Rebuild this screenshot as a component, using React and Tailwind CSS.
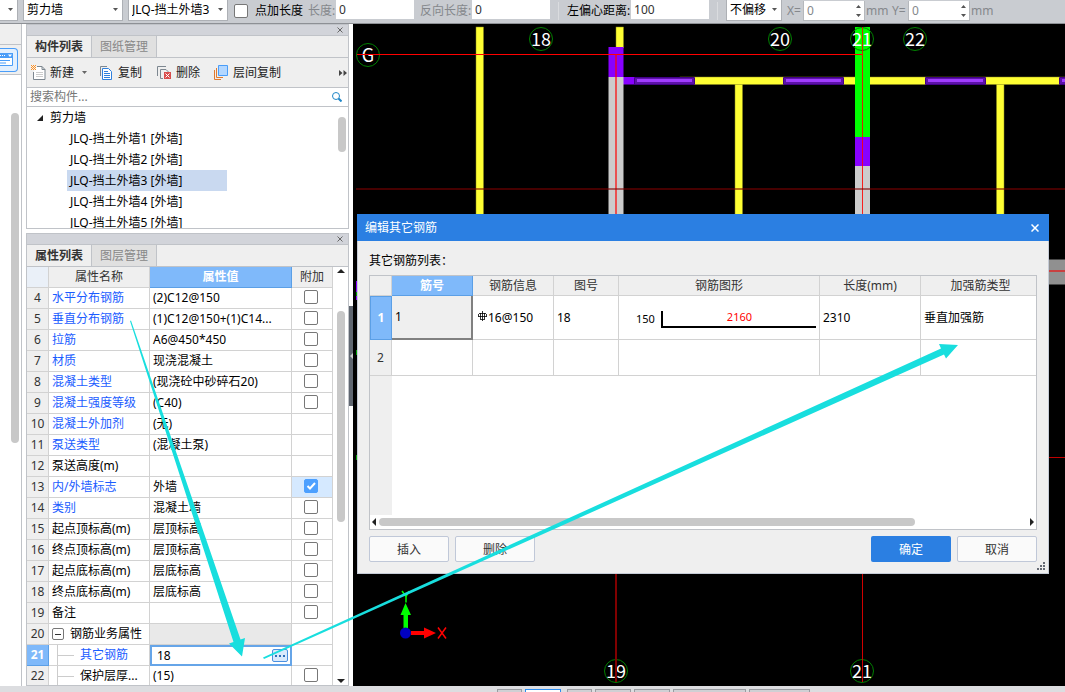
import { clsx } from 'clsx'

const components = [1, 2, 3, 4, 5]

const properties = [
  { id: 4, name: '水平分布钢筋', value: '(2)C12@150', link: true, box: true },
  { id: 5, name: '垂直分布钢筋', value: '(1)C12@150+(1)C14...', link: true, box: true },
  { id: 6, name: '拉筋', value: 'A6@450*450', link: true, box: true },
  { id: 7, name: '材质', value: '现浇混凝土', link: true, box: true },
  { id: 8, name: '混凝土类型', value: '(现浇砼中砂碎石20)', link: true, box: true },
  { id: 9, name: '混凝土强度等级', value: '(C40)', link: true, box: true },
  { id: 10, name: '混凝土外加剂', value: '(无)', link: true },
  { id: 11, name: '泵送类型', value: '(混凝土泵)', link: true },
  { id: 12, name: '泵送高度(m)', value: '' },
  { id: 13, name: '内/外墙标志', value: '外墙', link: true, box: true, checked: true },
  { id: 14, name: '类别', value: '混凝土墙', link: true, box: true },
  { id: 15, name: '起点顶标高(m)', value: '层顶标高', box: true },
  { id: 16, name: '终点顶标高(m)', value: '层顶标高', box: true },
  { id: 17, name: '起点底标高(m)', value: '层底标高', box: true },
  { id: 18, name: '终点底标高(m)', value: '层底标高', box: true },
  { id: 19, name: '备注', value: '', box: true },
  { id: 20, name: '钢筋业务属性', value: '', group: true },
  { id: 21, name: '其它钢筋', value: '18', link: true, child: true, active: true },
  { id: 22, name: '保护层厚...', value: '(15)', child: true, box: true },
]

const axes = [
  { label: 'G', x: 368, y: 55 },
  { label: '18', x: 541, y: 39 },
  { label: '20', x: 780, y: 39 },
  { label: '21', x: 862, y: 39 },
  { label: '22', x: 915, y: 39 },
  { label: '19', x: 616, y: 671 },
  { label: '21', x: 862, y: 671 },
]

function Select({ label, value, className }) {
  return (
    <div className={clsx('relative h-full shrink-0', className)}>
      <select
        aria-label={label}
        className="block h-full w-full appearance-none border border-t-0 border-[#adb0b5] bg-white pl-[3px] text-black"
      >
        <option>{value}</option>
      </select>
      <svg viewBox="0 0 5 3" className="pointer-events-none absolute top-2 right-[5px] h-[3px] w-[5px] fill-[#555]">
        <path d="M0 0h5L2.5 3z" />
      </svg>
    </div>
  )
}

function Field({ label, value, dim, className }) {
  return (
    <label className={clsx('flex h-full shrink-0 items-center', dim ? 'text-[#85888c]' : 'text-black', className)}>
      <span className="grow whitespace-nowrap">{label}</span>
      <input defaultValue={value} className="h-[19px] w-[78px] self-start bg-white pl-[3px] text-[#333]" />
    </label>
  )
}

function Spinner({ label, className }) {
  return (
    <div className={clsx('flex h-full shrink-0 items-center text-[#85888c]', className)}>
      <label className="relative flex grow items-center">
        <span className="grow">{label}</span>
        <input defaultValue="0" className="h-5 w-[62px] border border-t-0 border-[#b5b8bc] bg-white pl-[3px]" />
        <svg viewBox="0 0 5 12" className="absolute top-1 right-1 h-3 w-[5px] fill-[#555]">
          <path d="M0 3h5L2.5 0zM0 9h5L2.5 12z" />
        </svg>
      </label>
      <span className="w-[23px] pl-px">mm</span>
    </div>
  )
}

function TopBar() {
  return (
    <header className="flex h-6 shrink-0 items-start overflow-hidden border-b border-[#8d9095] bg-[#c9ccd1]">
      <div className="flex h-[21px] items-center">
        <Select label="楼层" value="" className="-ml-8 mr-[5px] w-[50px]" />
        <Select label="构件类型" value="剪力墙" className="mr-[5px] w-[100px]" />
        <Select label="构件" value="JLQ-挡土外墙3" className="mr-1.5 w-[100px]" />
        <label className="flex h-[19px] items-center gap-[7px] text-black">
          <CheckBox />
          点加长度
        </label>
        <Field label="长度:" value="0" dim className="ml-[5px] w-[106px]" />
        <Field label="反向长度:" value="0" dim className="ml-1.5 w-[130px]" />
        <div className="mx-2 h-[18px] w-px bg-[#dadcdf]" />
        <Field label="左偏心距离:" value="100" className="w-[142px]" />
        <div className="mx-2 h-[18px] w-px bg-[#dadcdf]" />
        <Select label="偏移" value="不偏移" className="mr-[5px] w-14" />
        <Spinner label="X=" className="mr-1 w-[101px]" />
        <Spinner label="Y=" className="w-[101px]" />
      </div>
    </header>
  )
}

function CheckBox({ checked, label }) {
  return (
    <span className="relative block h-3.5 w-3.5 shrink-0">
      <input
        type="checkbox"
        aria-label={label}
        defaultChecked={checked}
        className="peer block h-3.5 w-3.5 appearance-none rounded-[2px] border border-[#777] bg-white checked:border-[#4da0ff] checked:bg-[#4da0ff]"
      />
      <svg
        viewBox="0 0 14 14"
        className="pointer-events-none absolute inset-0 hidden h-3.5 w-3.5 fill-none stroke-white stroke-2 peer-checked:block"
      >
        <path d="M3.5 7l2.5 2.5L11 4" />
      </svg>
    </span>
  )
}

function SideStrip() {
  return (
    <aside className="mr-1 w-[22px] shrink-0 border-r border-[#c0c3c8] bg-white">
      <div className="h-[21px] border-b border-[#c0c3c8] bg-[#efefef]" />
      <div className="flex h-[30px] items-center border-b border-[#c0c3c8] bg-[#efefef]">
        <button aria-label="构件" className="h-6 w-[18px] rounded-r-[4px] border border-l-0 border-[#4a9df8] bg-[#e3f0fe]">
          <svg viewBox="0 0 17 22" className="h-[22px] w-[17px]">
            <path d="M0 4.500h12.500v12H0" fill="#fff" stroke="#4a9df8" />
            <path d="M0 4h13v5H0z" fill="#4a9df8" />
            <path d="M0 6.500h1M2 6.500h1M4 6.500h1" stroke="#fff" />
            <path d="M8 5.500h4L10 8z" fill="#fff" />
            <path d="M0 11.500h10M0 14h6" stroke="#4a9df8" />
          </svg>
        </button>
      </div>
      <div className="mt-[38px] ml-[11px] h-[330px] w-2 rounded-full bg-[#c8c8c8]" />
    </aside>
  )
}

function PanelTop({ tabs }) {
  return (
    <>
      <div className="flex h-[11px] shrink-0 items-center justify-end border-b border-[#c0c3c8] bg-[#d2d4da] pr-[5px]">
        <button aria-label="关闭">
          <svg viewBox="0 0 6 6" className="block h-1.5 w-1.5 stroke-[#666]">
            <path d="M.5.5l5 5M5.500.5l-5 5" />
          </svg>
        </button>
      </div>
      <div className="flex h-[22px] shrink-0 border-b border-[#c0c3c8] bg-[#efefef]">
        <button className="w-[65px] border-r border-[#c0c3c8] font-bold text-[#333]">{tabs[0]}</button>
        <button className="w-[65px] border-r border-[#c0c3c8] bg-[#e0e0e0] text-[#888]">{tabs[1]}</button>
      </div>
    </>
  )
}

function ToolButton({ icon, children, className }) {
  return (
    <button className={clsx('flex shrink-0 items-center gap-1 text-[#222]', className)}>
      <svg viewBox="0 0 15 15" className="h-[15px] w-[15px] shrink-0" fill="none">
        {icon}
      </svg>
      {children}
    </button>
  )
}

function ComponentPanel() {
  return (
    <section className="flex h-[205px] shrink-0 flex-col border border-[#c0c3c8] bg-white">
      <PanelTop tabs={['构件列表', '图纸管理']} />
      <div className="flex h-[30px] shrink-0 items-center border-b border-[#c0c3c8] bg-[#efefef] pl-1">
        <ToolButton
          className="w-[57px]"
          icon={
            <>
              <path d="M6 1.500h5l3 3v10H2.500V7M11 1.500v3h3" fill="#fff" stroke="#7d8790" />
              <path d="M5 7.500h7M5 9.500h7M5 11.500h7" stroke="#ccc" />
              <path d="M0 .5h1M2 .5h1M4 .5h1M1 1.500h1M3 1.500h1M0 2.500h1M2 2.500h1M4 2.500h1M1 3.500h1M3 3.500h1M0 4.500h1M2 4.500h1M4 4.500h1" stroke="#ff9020" />
            </>
          }
        >
          新建
          <svg viewBox="0 0 5 3" className="ml-1 h-[3px] w-[5px] shrink-0 fill-[#666]">
            <path d="M0 0h5L2.500 3z" />
          </svg>
        </ToolButton>
        <ToolButton
          className="ml-[11px]"
          icon={
            <>
              <path d="M1.500 11V1.500H8" stroke="#7d8790" />
              <path d="M3.500 3.500h6l3 3v8h-9z" fill="#fff" stroke="#2f80dd" />
              <path d="M5 6.500h4M5 8.500h6M5 10.500h6M5 12.500h6" stroke="#2f80dd" />
            </>
          }
        >
          复制
        </ToolButton>
        <ToolButton
          className="ml-[15px]"
          icon={
            <>
              <path d="M.5 11V1.500H9M6 13.500H3.500v-9H9l3 3" stroke="#7d8790" />
              <path d="M7 7h7v7H7z" fill="#d94c4c" />
              <path d="M8.500 8.500l4 4M12.500 8.500l-4 4" stroke="#fff" />
            </>
          }
        >
          删除
        </ToolButton>
        <ToolButton
          className="ml-[14px]"
          icon={
            <>
              <path d="M.5 5v9.500H7M2.500 3v9.500H9" stroke="#e07a30" />
              <path d="M4.500.5h9v10h-9z" fill="#b3d7ff" stroke="#4a9df8" />
            </>
          }
        >
          层间复制
        </ToolButton>
        <button aria-label="更多" className="mr-px ml-auto">
          <svg viewBox="0 0 8 6" className="h-1.5 w-2 fill-[#444]">
            <path d="M0 0l3.500 3L0 6zM4.500 0L8 3 4.500 6z" />
          </svg>
        </button>
      </div>
      <div className="flex h-[19px] shrink-0 items-center border-b border-[#c0c3c8] pr-1.5 pl-[3px]">
        <input aria-label="搜索构件" placeholder="搜索构件..." className="min-w-0 grow placeholder:text-[#777]" />
        <svg viewBox="0 0 10 10" className="h-2.5 w-2.5 fill-none stroke-[#1f86c7]">
          <circle cx="4" cy="4" r="3.500" />
          <path d="M6.500 6.500L9.500 9.500" strokeWidth="2" />
        </svg>
      </div>
      <div className="flex min-h-0 grow overflow-hidden">
        <ul className="grow leading-[21px] text-black">
          <li className="flex items-center gap-[7px] pl-[10px]">
            <svg viewBox="0 0 6 6" className="h-1.5 w-1.5 fill-[#222]">
              <path d="M6 0v6H0z" />
            </svg>
            剪力墙
          </li>
          {components.map((n) => (
            <li key={n} className={clsx('ml-10 w-40 pl-[3px]', n === 3 && 'bg-[#c9d9f0]')}>
              {`JLQ-挡土外墙${n} [外墙]`}
            </li>
          ))}
        </ul>
        <div className="mt-2.5 mr-0.5 h-[35px] w-2 rounded-full bg-[#c8c8c8]" />
      </div>
    </section>
  )
}

function PropertyName({ row }) {
  if (row.group) {
    return (
      <span className="flex items-center gap-1.5">
        <button aria-label="收起" className="flex h-3 w-3 items-center justify-center rounded-[2px] border border-[#777] bg-white">
          <span className="h-px w-1.5 bg-[#333]" />
        </button>
        {row.name}
      </span>
    )
  }
  if (row.child) {
    return (
      <span className="flex items-center">
        <span className="mr-1.5 ml-[5px] flex h-5 w-[17px] items-center border-l border-[#ccc]">
          <span className="h-px w-full bg-[#ccc]" />
        </span>
        {row.name}
      </span>
    )
  }
  return row.name
}

function PropertyRow({ row }) {
  const cell = 'overflow-hidden border-r border-b border-[#d2d2d2] p-0 whitespace-nowrap'
  return (
    <tr className="h-[21px]">
      <th
        className={clsx(
          'border-r border-b p-0 text-center',
          row.active ? 'border-[#5b9fe6] bg-[#7fb9fa] font-bold text-white' : 'border-[#d2d2d2] bg-[#efefef] font-normal text-[#333]',
        )}
      >
        {row.id}
      </th>
      <td className={clsx(cell, 'pl-[3px]', row.link ? 'text-[#1a5cff]' : 'text-black')}>
        <PropertyName row={row} />
      </td>
      {row.active ? (
        <td className="border-2 border-[#66a5e8] p-0">
          <div className="flex h-[17px] items-center justify-between bg-white pr-0.5">
            <input aria-label={row.name} defaultValue={row.value} className="w-20 pl-[5px] text-black" />
            <button aria-label="编辑" className="flex h-[13px] w-4 items-center justify-center gap-0.5 rounded-[2px] border border-[#4a90e0] bg-[#d9eafc]">
              <i className="h-0.5 w-0.5 bg-[#2f6fb8]" />
              <i className="h-0.5 w-0.5 bg-[#2f6fb8]" />
              <i className="h-0.5 w-0.5 bg-[#2f6fb8]" />
            </button>
          </div>
        </td>
      ) : (
        <td className={clsx(cell, 'pl-[3px] text-black', row.group && 'bg-[#e9e9e9]')}>{row.value}</td>
      )}
      <td className={clsx(cell, row.checked && 'bg-[#d5e9ff]')}>
        {row.box && (
          <div className="flex justify-center pr-0.5 pb-0.5">
            <CheckBox checked={row.checked} label={row.name} />
          </div>
        )}
      </td>
    </tr>
  )
}

function PropertyPanel() {
  return (
    <section className="flex min-h-0 grow flex-col overflow-hidden border border-[#c0c3c8] bg-white">
      <PanelTop tabs={['属性列表', '图层管理']} />
      <div className="flex min-h-0 grow">
        <table className="w-[306px] shrink-0 table-fixed border-separate border-spacing-0 self-start leading-[18px]">
          <thead>
            <tr className="h-[21px] bg-[#efefef] text-[#333]">
              <th className="w-[22px] border-r border-b border-[#d2d2d2] bg-[#eaf0f8] p-0" />
              <th className="w-[101px] border-r border-b border-[#d2d2d2] p-0 font-normal">属性名称</th>
              <th className="w-[142px] border-r border-b border-[#5b9fe6] bg-[#7fb9fa] p-0 font-bold text-white">属性值</th>
              <th className="border-r border-b border-[#d2d2d2] p-0 font-normal">附加</th>
            </tr>
          </thead>
          <tbody>
            {properties.map((row) => (
              <PropertyRow key={row.id} row={row} />
            ))}
          </tbody>
        </table>
        <div className="flex grow flex-col items-center justify-between py-0.5">
          <svg viewBox="0 0 8 4" className="h-1 w-2 fill-[#222]">
            <path d="M0 4h8L4 0z" />
          </svg>
          <div className="mt-[38px] mb-auto h-[211px] w-2 rounded-full bg-[#c8c8c8]" />
          <svg viewBox="0 0 8 4" className="h-1 w-2 fill-[#222]">
            <path d="M0 0h8L4 4z" />
          </svg>
        </div>
      </div>
    </section>
  )
}

function Opening({ x }) {
  return (
    <g>
      <rect x={x} y="77" width="61" height="8" rx="1" fill="#420087" />
      <rect x={x + 1} y="78" width="59" height="6" fill="#5c12a8" />
      <rect x={x + 3} y="79" width="55" height="3" fill="#a03cff" />
    </g>
  )
}

function Drawing() {
  return (
    <svg viewBox="353 24 712 662" preserveAspectRatio="xMinYMin slice" className="absolute inset-0 h-full w-full">
      {/* partition walls */}
      <g fill="#ffff33" stroke="#8a8a1c" strokeWidth=".5">
        <rect x="476" y="27" width="7.500" height="190" />
        <rect x="616" y="27" width="7.500" height="21" />
        <rect x="735" y="84" width="7.500" height="133" />
        <rect x="996.500" y="84" width="7.500" height="133" />
        <rect x="680" y="77" width="390" height="7.500" />
      </g>
      <rect x="623" y="77" width="13" height="7.500" fill="#8800ff" />
      <Opening x={634} />
      <Opening x={783} />
      <Opening x={925} />
      <Opening x={1059} />

      {/* shear walls */}
      <rect x="608.500" y="47" width="15" height="30" fill="#8800ff" />
      <rect x="608.500" y="77" width="15" height="140" fill="#ccc" />
      <rect x="855" y="27" width="15" height="110" fill="#0f0" />
      <rect x="855" y="137" width="15" height="29" fill="#8800ff" />
      <rect x="855" y="166" width="15" height="50" fill="#ccc" />
      <rect x="1040" y="259.500" width="25" height="25" fill="#909090" />

      {axes.map((a) => (
        <g key={`${a.label}-${a.x}-${a.y}`}>
          <circle cx={a.x} cy={a.y} r="11.500" fill="none" stroke="#008000" />
          <text x={a.x} y={a.y + 7} textAnchor="middle" fill="#fff" fontSize="18" className="font-['Noto_Sans_CJK_SC',sans-serif]">
            {a.label}
          </text>
        </g>
      ))}

      {/* axis lines */}
      <g stroke="#f00">
        <path d="M357 54.500h505" />
        <path d="M616 54v160" strokeWidth="2" opacity=".6" />
        <path d="M862.500 27v190" opacity=".85" />
        <path d="M356 189h709" strokeWidth="2" stroke="#800000" opacity=".55" />
        <path d="M1040 271h25" strokeWidth="2" stroke="#c84040" />
        <path d="M1040 457.500h25" stroke="#c00000" />
        <path d="M616 570v112" strokeWidth="2" stroke="#800000" />
        <path d="M862.500 570v112" stroke="#d00000" />
      </g>
      <path d="M356.500 281v19" stroke="#8800ff" />
      <path d="M356.500 292v4M356.500 350v5M356.500 455v5" stroke="#00a000" />

      {/* coordinate marker */}
      <path d="M403.500 628v-13h-3l5-12 5.500 12h-3v13z" fill="#0f0" />
      <path d="M411 631h13v-3.500l12 5.500-12 5.500V635h-13z" fill="#f00" />
      <circle cx="405.500" cy="633" r="5.500" fill="#0000c0" />
      <path d="M402 591l4 5.500 3-5.500M406 596.500v6" fill="none" stroke="#0f0" strokeWidth="1.500" />
      <path d="M438 627.500l8 11M446 627.500l-8 11" stroke="#f00" strokeWidth="1.500" />
    </svg>
  )
}

function RebarTable() {
  const head = 'h-5 border-r border-b border-[#d2d2d2] bg-[#efefef] p-0 font-normal text-[#333]'
  const cell = 'border-r border-b border-[#d2d2d2] p-0 pl-[3px] text-left text-black'
  return (
    <div className="flex h-[255px] flex-col overflow-hidden border border-[#c0c3c8] bg-white">
      <div className="flex grow flex-col">
        <table className="w-full table-fixed border-separate border-spacing-0">
          <thead>
            <tr>
              <th className={clsx(head, 'w-[22px] bg-[#edf1f8]')} />
              <th className="w-[81px] border-r border-b border-[#5b9fe6] bg-[#7fb9fa] p-0 font-bold text-white">筋号</th>
              <th className={clsx(head, 'w-[81px]')}>钢筋信息</th>
              <th className={clsx(head, 'w-[65px]')}>图号</th>
              <th className={clsx(head, 'w-[201px]')}>钢筋图形</th>
              <th className={clsx(head, 'w-[101px]')}>长度(mm)</th>
              <th className="h-5 border-b border-[#d2d2d2] bg-[#efefef] p-0 pl-1 font-normal text-[#333]">加强筋类型</th>
            </tr>
          </thead>
          <tbody>
            <tr className="h-11">
              <th className="border border-[#5b9fe6] bg-[#7fb9fa] p-0 font-bold text-white">1</th>
              <td className="border-r-2 border-b-2 border-[#808080] bg-[#efefef] p-0 pl-[3px] text-black">1</td>
              <td className={cell}>
                <span className="flex items-center gap-px pl-0.5">
                  <svg viewBox="0 0 9 10" className="mb-1 h-2.5 w-[9px] fill-none stroke-black">
                    <path d="M4.500 0v10M2.500 2v6M6.500 2v6M1 2.500h7M0 5.500h9M2 8.500h5M.5 3v2.500M8.500 3v2.500" strokeWidth=".8" />
                  </svg>
                  16@150
                </span>
              </td>
              <td className={cell}>18</td>
              <td className={cell}>
                <div className="flex items-center gap-1.5 pt-1 pr-[3px] pl-[14px] text-[11px]">
                  150
                  <span className="flex h-[17px] grow justify-center border-b-2 border-l-2 border-black leading-[11px] text-[#f00]">
                    2160
                  </span>
                </div>
              </td>
              <td className={cell}>2310</td>
              <td className={clsx(cell, 'border-r-0')}>垂直加强筋</td>
            </tr>
            <tr className="h-9">
              <th className={head}>2</th>
              <td className={cell} />
              <td className={cell} />
              <td className={cell} />
              <td className={cell} />
              <td className={cell} />
              <td className={clsx(cell, 'border-r-0')} />
            </tr>
          </tbody>
        </table>
        <div className="w-[22px] grow bg-[#efefef]" />
      </div>
      <div className="flex h-3.5 shrink-0 items-center px-0.5">
        <svg viewBox="0 0 4 8" className="h-2 w-1 fill-[#222]">
          <path d="M4 0v8L0 4z" />
        </svg>
        <div className="mr-auto ml-[3px] h-2 w-[81%] rounded-full bg-[#c8c8c8]" />
        <svg viewBox="0 0 4 8" className="h-2 w-1 fill-[#222]">
          <path d="M0 0v8l4-4z" />
        </svg>
      </div>
    </div>
  )
}

function RebarDialog() {
  const button = 'h-[26px] w-20 rounded-[2px] border border-[#c0c8d8] bg-[#fafafa] pt-0.5 text-[#333]'
  return (
    <div role="dialog" aria-label="编辑其它钢筋" className="absolute top-[190px] right-4 left-1 border border-t-0 border-[#c5cbd6] bg-[#efefef]">
      <div className="-mx-px flex h-[27px] items-center justify-between bg-[#2b7fe2] pr-2.5 pl-2 text-white">
        <span>编辑其它钢筋</span>
        <button aria-label="关闭">
          <svg viewBox="0 0 8 8" className="block h-2 w-2 stroke-white stroke-[1.5]">
            <path d="M.5.5l7 7M7.500.5l-7 7" />
          </svg>
        </button>
      </div>
      <div className="px-[11px] pb-[11px]">
        <p className="pt-[11px] pb-[5px] leading-[18px] text-black">其它钢筋列表：</p>
        <RebarTable />
        <div className="mt-1.5 flex gap-1.5">
          <button className={button}>插入</button>
          <button className={button}>删除</button>
          <button className="ml-auto h-[26px] w-20 rounded-[2px] bg-[#2b7fe2] pt-0.5 text-white">确定</button>
          <button className={button}>取消</button>
        </div>
      </div>
      <svg viewBox="0 0 8 8" className="absolute right-[3px] bottom-[3px] h-2 w-2 fill-[#666b75]">
        <path d="M6 0h2v2H6zM3 3h2v2H3zM6 3h2v2H6zM0 6h2v2H0zM3 6h2v2H3zM6 6h2v2H6z" />
      </svg>
    </div>
  )
}

function StatusBar() {
  const tab = 'h-3 shrink-0 border border-[#999ca1] bg-[#cfd0d4]'
  return (
    <footer className="flex h-1.5 shrink-0 gap-[3px] overflow-hidden bg-[#dcdde0] pt-[3px] pl-[497px]">
      <button aria-label="1" className={clsx(tab, 'w-[25px]')} />
      <button aria-label="2" className="mr-[3px] h-3 w-9 shrink-0 border border-[#2b8cf0] bg-white" />
      <button aria-label="3" className={clsx(tab, 'w-[25px]')} />
      <button aria-label="4" className={clsx(tab, 'w-9')} />
      <button aria-label="5" className={clsx(tab, 'w-9')} />
      <button aria-label="6" className={clsx(tab, 'w-[73px]')} />
      <button aria-label="7" className={clsx(tab, 'w-[61px]')} />
    </footer>
  )
}

export default function App() {
  return (
    <div className="relative flex h-screen flex-col overflow-hidden bg-white font-['Noto_Sans','Noto_Sans_CJK_SC',sans-serif] text-xs">
      <TopBar />
      <div className="flex min-h-0 grow">
        <SideStrip />
        <div className="flex w-[323px] shrink-0 flex-col gap-1">
          <ComponentPanel />
          <PropertyPanel />
        </div>
        <div className="flex w-1 shrink-0 flex-col pt-[282px]">
          <button aria-label="折叠" className="flex h-[100px] items-center justify-end bg-[#5f6670]">
            <svg viewBox="0 0 3 6" className="h-1.5 w-[3px] fill-[#ccc]">
              <path d="M3 0v6L0 3z" />
            </svg>
          </button>
        </div>
        <main className="relative grow bg-black">
          <Drawing />
          <RebarDialog />
        </main>
      </div>
      <StatusBar />

      {/* callout arrows */}
      <svg viewBox="0 0 1065 692" preserveAspectRatio="xMinYMin slice" className="pointer-events-none absolute inset-0 h-full w-full fill-[#18dede]">
        <path d="M130 321l1-.5L240.500 639.500l4.500-1.500-3 18.500-13-13 4.500-1.500z" />
        <path d="M263 657.500L941 348.500l-2-4.500 19 1-12 13.500-2-4L264 659z" />
      </svg>
    </div>
  )
}
